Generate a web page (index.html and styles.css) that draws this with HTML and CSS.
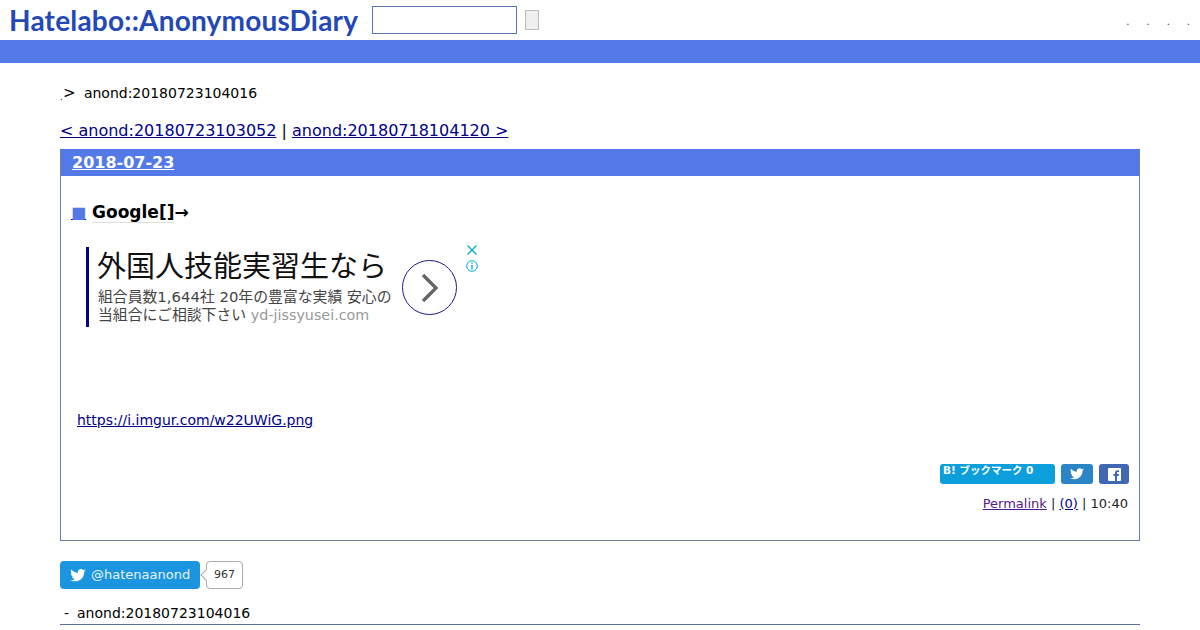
FILE: index.html
```html
<!DOCTYPE html>
<html lang="en">
<head>
    <meta charset="UTF-8">
    <meta name="viewport" content="width=device-width, initial-scale=1.0">
    <title>anond:20180723104016</title>
    <link rel="stylesheet" href="styles.css">
</head>
<body>
    <header class="top">
        <a class="logo" href="#">Hatelabo::AnonymousDiary</a>
        <input class="search" type="text">
        <button class="go"></button>
        <div class="menu"><span>.</span><span>.</span><span>.</span><span>.</span></div>
    </header>
    <div class="band"></div>

    <main class="page">
        <p class="crumb"><span class="dot">.</span><span class="gt">&gt;</span><span>anond:20180723104016</span></p>
        <p class="pager"><a href="#">&lt; anond:20180723103052</a> | <a href="#">anond:20180718104120 &gt;</a></p>

        <section class="day">
            <h2 class="date"><a href="#">2018-07-23</a></h2>
            <div class="body">
                <h3 class="title"><a class="mark" href="#">■</a> <span class="title-text">Google[]</span>→</h3>

                <div class="ad">
                    <div class="ad-text">
                        <div class="ad-head">外国人技能実習生なら</div>
                        <div class="ad-sub">組合員数1,644社 20年の豊富な実績 安心の<br>当組合にご相談下さい <span class="ad-site">yd-jissyusei.com</span></div>
                    </div>
                    <div class="ad-go">
                        <svg width="20" height="30" viewBox="0 0 20 30"><path d="M3 2l13 13L3 28" fill="none" stroke="#666" stroke-width="3.4"/></svg>
                    </div>
                    <div class="ad-icons">
                        <svg width="12" height="12" viewBox="0 0 12 12"><path d="M1.5 1.5l9 9M10.500 1.500l-9 9" stroke="#00aecd" stroke-width="1.300"/></svg>
                        <svg width="12" height="12" viewBox="0 0 12 12"><circle cx="6" cy="6" r="5.300" fill="none" stroke="#00aecd"/><path d="M6 5v4.500M6 2.500v1.300" stroke="#00aecd" stroke-width="1.300"/></svg>
                    </div>
                </div>

                <p class="url"><a href="#">https://i.imgur.com/w22UWiG.png</a></p>

                <div class="share">
                    <a class="hb" href="#">B! ブックマーク 0</a>
                    <a class="sbtn tw" href="#">
                        <svg width="14" height="12" viewBox="0 0 24 20"><path fill="#fff" d="M24 2.400c-.9.400-1.800.7-2.800.8 1-.6 1.800-1.600 2.200-2.700-1 .6-2 1-3.100 1.200C19.300.7 18 0 16.600 0c-2.700 0-4.900 2.200-4.900 4.900 0 .4 0 .8.100 1.100C7.700 5.800 4.100 3.900 1.700.9c-.4.700-.7 1.600-.7 2.500 0 1.700.9 3.200 2.200 4.100-.8 0-1.600-.2-2.200-.6v.1c0 2.400 1.700 4.400 3.900 4.800-.4.100-.8.200-1.300.2-.3 0-.6 0-.9-.1.600 2 2.400 3.400 4.600 3.400-1.700 1.300-3.800 2.100-6.100 2.100-.4 0-.8 0-1.200-.1C2.200 18.200 4.800 19 7.500 19c9.100 0 14-7.500 14-14v-.6c1-.7 1.800-1.600 2.500-2z"/></svg>
                    </a>
                    <a class="sbtn fb" href="#">
                        <svg width="13" height="13" viewBox="0 0 13 13"><path fill="#fff" fill-rule="evenodd" d="M1 0h11a1 1 0 0 1 1 1v11a1 1 0 0 1-1 1H9V8h1.700l.3-2H9V5c0-.6.200-1 1-1h1V2.200H9.500C7.800 2.200 7 3.200 7 4.700V6H5.500v2H7v5H1a1 1 0 0 1-1-1V1a1 1 0 0 1 1-1z"/></svg>
                    </a>
                </div>
                <p class="foot"><a class="visited" href="#">Permalink</a> | <a href="#">(0)</a> | 10:40</p>
            </div>
        </section>

        <div class="follow">
            <a class="follow-btn" href="#">
                <svg width="16" height="13" viewBox="0 0 24 20"><path fill="#fff" d="M24 2.400c-.9.400-1.800.7-2.800.8 1-.6 1.800-1.600 2.200-2.700-1 .6-2 1-3.100 1.200C19.300.7 18 0 16.600 0c-2.700 0-4.900 2.200-4.900 4.900 0 .4 0 .8.100 1.100C7.700 5.800 4.100 3.900 1.700.9c-.4.700-.7 1.600-.7 2.500 0 1.700.9 3.200 2.200 4.100-.8 0-1.600-.2-2.200-.6v.1c0 2.400 1.700 4.400 3.900 4.800-.4.100-.8.200-1.300.2-.3 0-.6 0-.9-.1.600 2 2.400 3.400 4.600 3.400-1.700 1.300-3.800 2.100-6.100 2.100-.4 0-.8 0-1.200-.1C2.200 18.200 4.800 19 7.500 19c9.100 0 14-7.500 14-14v-.6c1-.7 1.800-1.600 2.500-2z"/></svg>
                <span class="handle">@hatenaanond</span>
            </a>
            <span class="count">967</span>
        </div>

        <h4 class="refs"><span class="dash">-</span>anond:20180723104016</h4>
    </main>
</body>
</html>
```

FILE: styles.css
```css
body {
    font-family: "DejaVu Sans", sans-serif;
    background-color: #fff;
    color: #000;
    margin: 0;
    padding: 0;
    height: 630px;
    overflow: hidden;
}

a {
    color: #00008b;
}

p {
    margin: 0;
}

.top {
    display: flex;
    align-items: center;
    height: 40px;
    padding-left: 9px;
}

.logo {
    font-family: Lato, sans-serif;
    font-size: 28px;
    font-weight: 700;
    letter-spacing: 0.2px;
    color: #2448b8;
    text-decoration: none;
    width: 363px;
    white-space: nowrap;
}

.search {
    box-sizing: border-box;
    width: 145px;
    height: 28px;
    margin: 0 8px 0 0;
    padding: 0;
    border: 1px solid #5a78b0;
    background: #fff;
}

.go {
    box-sizing: border-box;
    width: 14px;
    height: 20px;
    margin: 0;
    padding: 0;
    border: 1px solid #bbb;
    background: #efefef;
}

.menu {
    display: flex;
    gap: 17px;
    margin-left: auto;
    padding: 3px 10px 0 0;
    font-size: 10px;
    color: #444;
}

.band {
    height: 23px;
    background-color: #5279e7;
}

.page {
    margin: 0 60px;
}

.crumb {
    display: flex;
    align-items: center;
    margin-top: 21px;
    height: 18px;
    font-size: 14px;
}

.dot {
    font-size: 9px;
    padding-top: 8px;
}

.gt {
    width: 21px;
    box-sizing: border-box;
    font-size: 15px;
}

.pager {
    margin-top: 19px;
    font-size: 16px;
    line-height: 20px;
}

.day {
    margin-top: 8px;
    height: 391px;
    border: 1px solid #6a7fa5;
    border-top: 0;
}

.date {
    margin: 0;
    height: 27px;
    padding-left: 11px;
    background-color: #5279e7;
    font-size: 16px;
    line-height: 27px;
}

.date a {
    color: #fff;
}

.body {
    padding: 0 10px 0 10px;
}

.title {
    margin: 25px 0 0;
    font-size: 17px;
    line-height: 22px;
    height: 22px;
}

.mark {
    color: #5279e7;
    font-size: 16px;
    text-decoration-color: #00008b;
}

.title-text {
    border-bottom: 1px solid #ddd;
}

.ad {
    display: flex;
    position: relative;
    width: 393px;
    height: 80px;
    margin: 24px 0 0 15px;
    border-left: 3px solid #00008b;
}

.ad-text {
    width: 304px;
    padding-left: 9px;
    font-family: "DejaVu Sans", "Noto Sans CJK JP", sans-serif;
}

.ad-head {
    margin: 1px 0 0 -1px;
    font-size: 29px;
    line-height: 38px;
    color: #111;
    white-space: nowrap;
}

.ad-sub {
    margin-top: 2px;
    font-size: 14.850px;
    line-height: 18px;
    color: #444;
    white-space: nowrap;
}

.ad-site {
    font-size: 14.300px;
    color: #999;
}

.ad-go {
    display: flex;
    align-items: center;
    justify-content: center;
    box-sizing: border-box;
    width: 55px;
    height: 55px;
    margin-top: 13px;
    border: 1px solid #1a1a8c;
    border-radius: 50%;
}

.ad-icons {
    display: flex;
    flex-direction: column;
    gap: 4px;
    margin: -3px 0 0 9px;
}

.url {
    margin-top: 84px;
    padding-left: 6px;
    font-size: 14px;
    line-height: 18px;
}

.share {
    display: flex;
    justify-content: flex-end;
    gap: 6px;
    margin-top: 35px;
}

.hb {
    box-sizing: border-box;
    width: 115px;
    height: 20px;
    padding-left: 3px;
    border-radius: 3px;
    background-color: #0d9fdb;
    color: #fff;
    font-family: "DejaVu Sans", "Noto Sans CJK JP", sans-serif;
    font-size: 10.500px;
    font-weight: 700;
    line-height: 13px;
    text-decoration: none;
}

.sbtn {
    display: flex;
    align-items: center;
    justify-content: center;
    width: 32px;
    height: 20px;
    border-radius: 3px;
}

.tw {
    background-color: #2a84c6;
}

.fb {
    width: 30px;
    background-color: #4267b2;
}

.foot {
    margin-top: 11px;
    padding-right: 1px;
    text-align: right;
    font-size: 13px;
    line-height: 17px;
    color: #222;
}

.visited {
    color: #551a8b;
}

.follow {
    display: flex;
    align-items: center;
    margin-top: 20px;
}

.follow-btn {
    display: flex;
    align-items: center;
    gap: 5px;
    box-sizing: border-box;
    width: 140px;
    height: 28px;
    padding-left: 10px;
    border-radius: 4px;
    background-color: #1b95e0;
    color: #e6f3fb;
    font-size: 13px;
    text-decoration: none;
}

.handle {
    padding-bottom: 2px;
}

.count {
    position: relative;
    box-sizing: border-box;
    width: 37px;
    height: 28px;
    margin-left: 6px;
    border: 1px solid #aaa;
    border-radius: 4px;
    font-size: 11px;
    line-height: 25px;
    text-align: center;
    color: #333;
}

.count::before {
    content: "";
    position: absolute;
    left: -5px;
    top: 9px;
    width: 7px;
    height: 7px;
    background: #fff;
    border-left: 1px solid #aaa;
    border-bottom: 1px solid #aaa;
    transform: rotate(45deg);
}

.refs {
    display: flex;
    margin: 15px 0 0;
    height: 20px;
    border-bottom: 1px solid #5a6f95;
    font-size: 14px;
    font-weight: 400;
    line-height: 18px;
}

.dash {
    width: 17px;
    padding-left: 4px;
    box-sizing: border-box;
}
```
